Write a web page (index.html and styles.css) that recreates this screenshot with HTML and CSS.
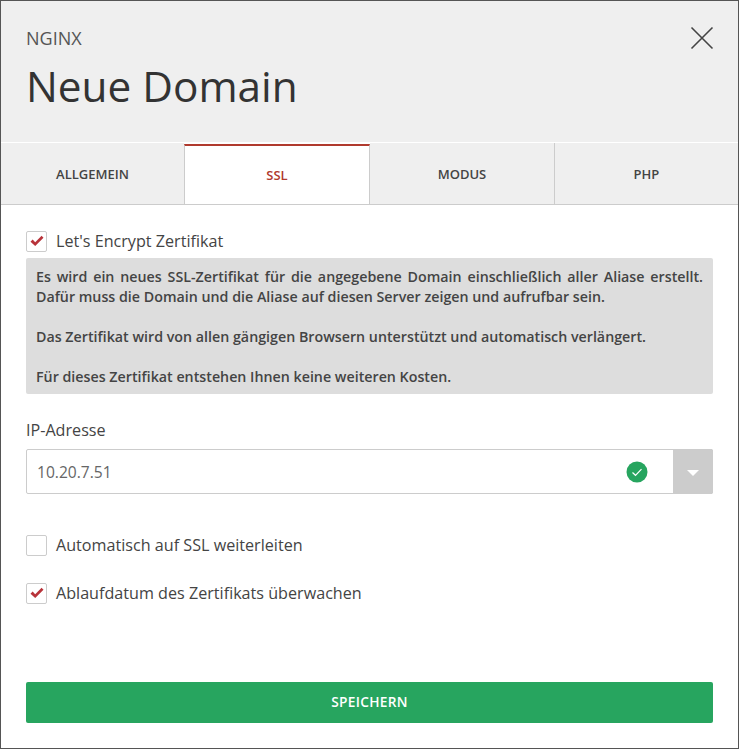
FILE: index.html
```html
<!DOCTYPE html>
<html lang="de">
<head>
<meta charset="utf-8">
<title>Neue Domain</title>
<link rel="stylesheet" href="styles.css">
</head>
<body>
<div class="dialog">
  <header class="head">
    <div class="head-text">
      <div class="eyebrow">NGINX</div>
      <h1 class="title">Neue Domain</h1>
    </div>
    <svg class="close" width="24" height="24" viewBox="0 0 24 24"><path d="M1.5 1.5 22.5 22.5M22.5 1.5 1.5 22.5" fill="none" stroke="#444" stroke-width="1.6"/></svg>
  </header>
  <nav class="tabs">
    <div class="tab">ALLGEMEIN</div>
    <div class="tab active">SSL</div>
    <div class="tab">MODUS</div>
    <div class="tab">PHP</div>
  </nav>
  <main class="body">
    <label class="check first">
      <span class="box"><svg width="14" height="12" viewBox="0 0 14 12"><path d="M0.5 6.7 2.6 4.6 5.2 7.2 11.6 0.8 13.5 2.8 5.2 11Z" fill="#b8333a"/></svg></span>
      <span>Let's Encrypt Zertifikat</span>
    </label>
    <div class="note">
      <p>Es wird ein neues SSL-Zertifikat für die angegebene Domain einschließlich aller Aliase erstellt. Dafür muss die Domain und die Aliase auf diesen Server zeigen und aufrufbar sein.</p>
      <p>Das Zertifikat wird von allen gängigen Browsern unterstützt und automatisch verlängert.</p>
      <p>Für dieses Zertifikat entstehen Ihnen keine weiteren Kosten.</p>
    </div>
    <div class="field-label">IP-Adresse</div>
    <div class="select">
      <span class="value">10.20.7.51</span>
      <svg class="ok" width="22" height="22" viewBox="0 0 22 22"><circle cx="11" cy="11" r="10.5" fill="#27a55f"/><path d="M6.5 11.5 9.5 14.3 15.5 8.2" fill="none" stroke="#fff" stroke-width="1.2"/></svg>
      <span class="arrow"><span class="caret"></span></span>
    </div>
    <label class="check second">
      <span class="box"></span>
      <span>Automatisch auf SSL weiterleiten</span>
    </label>
    <label class="check third">
      <span class="box"><svg width="14" height="12" viewBox="0 0 14 12"><path d="M0.5 6.7 2.6 4.6 5.2 7.2 11.6 0.8 13.5 2.8 5.2 11Z" fill="#b8333a"/></svg></span>
      <span>Ablaufdatum des Zertifikats überwachen</span>
    </label>
    <button class="save" type="button">SPEICHERN</button>
  </main>
</div>
</body>
</html>
```

FILE: styles.css
```css
* { box-sizing: border-box; }
html, body { margin: 0; padding: 0; background: #fff; }
body { font-family: "Open Sans", "Liberation Sans", sans-serif; color: #444; }
.dialog {
  width: 739px;
  height: 749px;
  border: 1px solid #555;
  display: flex;
  flex-direction: column;
  background: #fff;
}
.head {
  height: 142px;
  background: #efefef;
  display: flex;
  justify-content: space-between;
  align-items: flex-start;
  padding: 25px 24px 0 25px;
  border-bottom: 1px solid #fff;
}
.eyebrow { font-size: 18px; line-height: 24px; color: #555; }
.title { margin: 8px 0 0; font-size: 42.3px; line-height: 56px; font-weight: 400; color: #333; }
.close { margin-top: 0; display: block; }
.tabs { height: 62px; display: flex; background: #efefef; border-bottom: 1px solid #ccc; }
.tab {
  width: 184px;
  display: flex;
  align-items: center;
  justify-content: center;
  font-size: 13px;
  font-weight: 600;
  color: #444;
  padding-top: 1px;
}
.tab:first-child { width: 183px; }
.tab:last-child { flex: 1; border-left: 1px solid #ccc; }
.tab.active {
  width: 186px;
  background: #fff;
  color: #b03a2e;
  border-top: 2px solid #b03a2e;
  box-shadow: 0 -1px 0 #fff;
  margin-top: 1px;
  margin-bottom: -1px;
  padding-top: 0;
  border-bottom: 1px solid #ccc;
  border-right: 1px solid #ccc;
  border-left: 1px solid #ccc;
}
.body { flex: 1; padding: 0 25px; display: flex; flex-direction: column; }
.check { display: flex; align-items: center; gap: 9px; font-size: 16.15px; line-height: 22px; color: #444; }
.check.first { margin-top: 25px; }
.check.second { margin-top: 40px; }
.check.third { margin-top: 26px; }
.box {
  width: 21px;
  height: 21px;
  border: 1px solid #ccc;
  border-radius: 2px;
  display: flex;
  align-items: center;
  justify-content: center;
  background: #fff;
}
.note {
  margin-top: 6px;
  background: #ddd;
  border-radius: 2px;
  padding: 9px 10px 4px;
  font-size: 14.25px;
  line-height: 20px;
  font-weight: 600;
  color: #444;
  text-align: justify;
  height: 136px;
}
.note p { margin: 0 0 20px; }
.field-label { margin-top: 24px; font-size: 16.15px; line-height: 24px; color: #444; }
.select {
  margin-top: 7px;
  height: 45px;
  border: 1px solid #ccc;
  border-radius: 2px;
  display: flex;
  align-items: center;
  padding-left: 10px;
  position: relative;
}
.value { flex: 1; font-size: 15.6px; color: #666; }
.ok { margin-right: 25px; display: block; }
.arrow {
  width: 40px;
  align-self: stretch;
  margin: -1px -1px -1px 0;
  background: #ccc;
  border-radius: 0 2px 2px 0;
  display: flex;
  align-items: center;
  justify-content: center;
}
.caret {
  width: 0;
  height: 0;
  border-left: 6px solid transparent;
  border-right: 6px solid transparent;
  border-top: 6px solid #fff;
  margin-top: 2px;
}
.save {
  margin-top: 78px;
  height: 41px;
  padding: 0 0 2px;
  background: #27a55f;
  border: 0;
  border-radius: 2px;
  color: #fff;
  font-family: inherit;
  font-size: 13.7px;
  font-weight: 600;
  letter-spacing: 0.3px;
}
```
